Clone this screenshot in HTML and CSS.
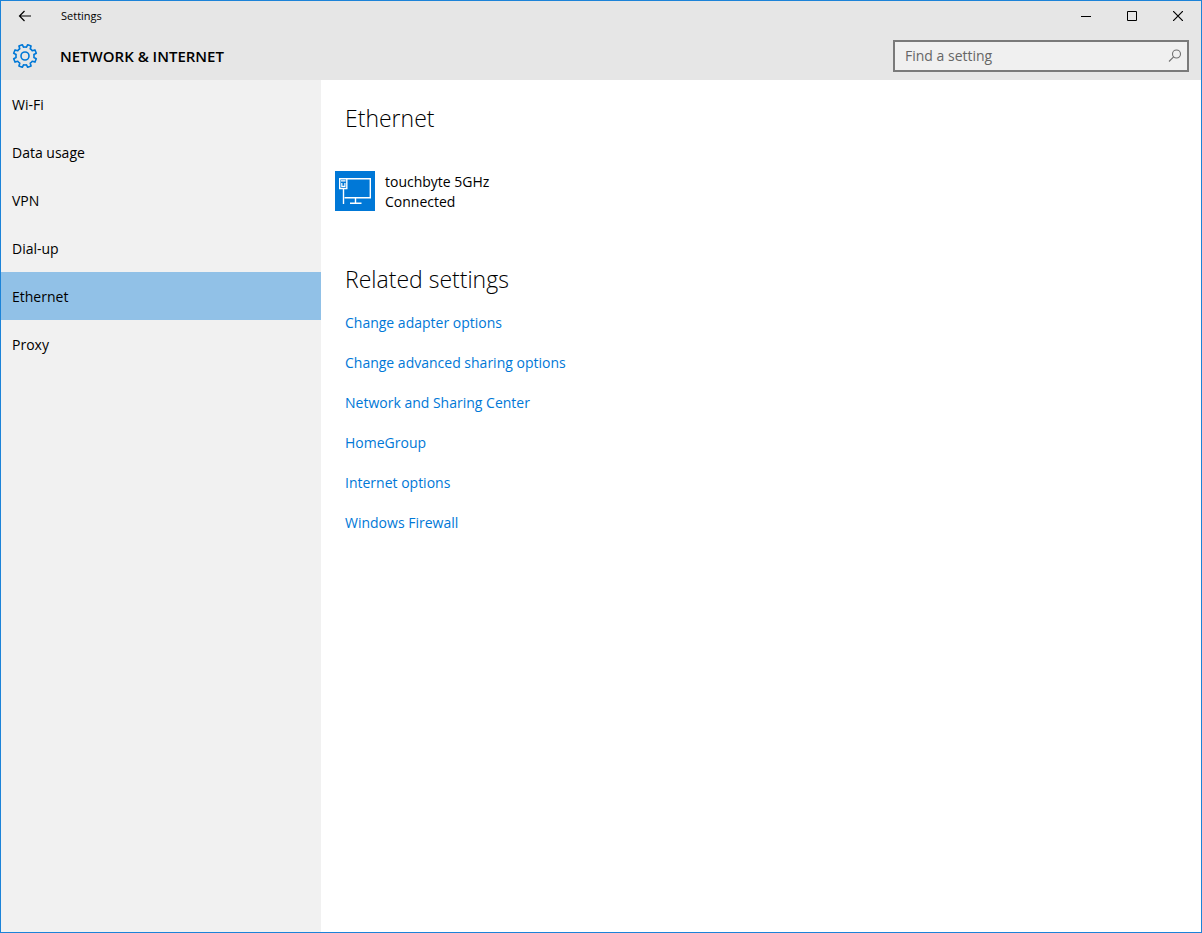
FILE: index.html
```html
<!DOCTYPE html>
<html lang="en">
<head>
<meta charset="utf-8">
<title>Settings</title>
<link rel="stylesheet" href="styles.css">
</head>
<body>
<div class="window">
  <header class="header">
    <div class="titlebar">
      <button class="back" type="button" aria-label="Back">
        <svg width="14" height="12" viewBox="0 0 14 12"><path d="M13 6H1.5M6.5 1L1.5 6l5 5" fill="none" stroke="#000" stroke-width="1.2"/></svg>
      </button>
      <span class="title">Settings</span>
      <div class="controls">
        <button type="button" aria-label="Minimize"><svg width="10" height="10" viewBox="0 0 10 10"><path d="M0 5.5h10" stroke="#000"/></svg></button>
        <button type="button" aria-label="Maximize"><svg width="10" height="10" viewBox="0 0 10 10"><path d="M.5.5h9v9h-9z" fill="none" stroke="#000"/></svg></button>
        <button type="button" aria-label="Close"><svg width="10" height="10" viewBox="0 0 10 10"><path d="M0 0l10 10M10 0L0 10" stroke="#000" stroke-width="1.2"/></svg></button>
      </div>
    </div>
    <div class="heading">
      <svg class="gear" width="26" height="26" viewBox="-13 -13 26 26" fill="none" stroke="#0078d7" stroke-width="1.6" stroke-linejoin="round">
        <path d="M8.9 1.5L11.3 2.7L9.9 6.1L7.3 5.2Q6.5 6.5 5.2 7.3L6.1 9.9L2.7 11.3L1.5 8.9Q0 9.2-1.5 8.9L-2.7 11.3L-6.1 9.9L-5.2 7.3Q-6.5 6.5-7.3 5.2L-9.9 6.1L-11.3 2.7L-8.9 1.5Q-9.2 0-8.9-1.5L-11.3-2.7L-9.9-6.1L-7.3-5.2Q-6.5-6.5-5.2-7.3L-6.1-9.9L-2.7-11.3L-1.5-8.9Q0-9.2 1.5-8.9L2.7-11.3L6.1-9.9L5.2-7.3Q6.5-6.5 7.3-5.2L9.9-6.1L11.3-2.7L8.9-1.5Q9.2 0 8.9 1.5Z"/>
        <circle r="4"/>
      </svg>
      <h1>NETWORK &amp; INTERNET</h1>
      <form class="search">
        <input type="text" placeholder="Find a setting" aria-label="Find a setting">
        <button type="submit" aria-label="Search"><svg width="14" height="14" viewBox="0 0 14 14" fill="none" stroke="#707070" stroke-width="1.1"><circle cx="8.5" cy="5" r="4"/><path d="M5.6 7.9L1 12.5"/></svg></button>
      </form>
    </div>
  </header>
  <div class="body">
    <nav class="sidebar">
      <a href="#">Wi-Fi</a>
      <a href="#">Data usage</a>
      <a href="#">VPN</a>
      <a href="#">Dial-up</a>
      <a href="#" class="active" aria-current="page">Ethernet</a>
      <a href="#">Proxy</a>
    </nav>
    <main class="content">
      <h2>Ethernet</h2>
      <button class="connection" type="button">
        <svg width="40" height="40" viewBox="0 0 40 40" fill="none" stroke="#fff">
          <path d="M0 0h40v40H0z" fill="#0078d7" stroke="none"/>
          <path d="M12 7.7h23.3v19.1H9.5M20.5 27v5M15 32.3h11.5" stroke-width="1.4"/>
          <path d="M8.5 18v15" stroke-width="1.4"/>
          <path d="M4.7 7.7h7.1v9.8H4.7z" stroke-width="1.4"/>
          <path d="M6 9.8h4.6M6.8 12v3.4h3.1V12" stroke-width="1.2"/>
        </svg>
        <span class="label"><span>touchbyte 5GHz</span><span>Connected</span></span>
      </button>
      <h2>Related settings</h2>
      <ul class="links">
        <li><a href="#">Change adapter options</a></li>
        <li><a href="#">Change advanced sharing options</a></li>
        <li><a href="#">Network and Sharing Center</a></li>
        <li><a href="#">HomeGroup</a></li>
        <li><a href="#">Internet options</a></li>
        <li><a href="#">Windows Firewall</a></li>
      </ul>
    </main>
  </div>
</div>
</body>
</html>
```
FILE: styles.css
```css
* {
  box-sizing: border-box;
}

body {
  margin: 0;
  font: 14px/20px "Segoe UI", "Open Sans", "Noto Sans", sans-serif;
  color: #000;
  background: #fff;
}

button,
input {
  font: inherit;
  color: inherit;
  margin: 0;
  padding: 0;
  border: 0;
  background: none;
}

svg {
  display: block;
  flex: none;
}

a {
  text-decoration: none;
}

.window {
  display: flex;
  flex-direction: column;
  min-height: 100vh;
  border: 1px solid #1c83d8;
}

.header {
  background: #e6e6e6;
}

.titlebar {
  display: flex;
  align-items: center;
  height: 30px;
}

.back {
  display: flex;
  align-items: center;
  justify-content: center;
  width: 48px;
  height: 30px;
}

.title {
  flex: 1;
  padding-left: 12px;
  font-size: 11px;
}

.controls {
  display: flex;
}

.controls button {
  display: flex;
  align-items: center;
  justify-content: center;
  width: 46px;
  height: 30px;
}

.heading {
  display: flex;
  align-items: center;
  height: 49px;
  padding: 1px 12px 0 11px;
}

h1 {
  flex: 1;
  margin: 0;
  padding-left: 22px;
  font-size: 15px;
  font-weight: 600;
}

.search {
  display: flex;
  align-items: center;
  width: 296px;
  height: 32px;
  padding: 0 5px 0 10px;
  border: 2px solid #7a7a7a;
  background: #f0f0f0;
}

.search input {
  flex: 1;
  min-width: 0;
  outline: 0;
}

.search input::placeholder {
  color: #666;
  opacity: 1;
}

.body {
  display: flex;
  flex: 1;
}

.sidebar {
  flex: none;
  width: 320px;
  background: #f1f1f1;
}

.sidebar a {
  display: block;
  padding: 15px 11px 13px;
  color: #000;
}

.sidebar .active {
  background: #91c1e7;
}

.content {
  flex: 1;
  padding: 22px 24px;
}

h2 {
  margin: 0;
  font-size: 23px;
  font-weight: 300;
  line-height: 32px;
}

.connection {
  display: flex;
  align-items: flex-start;
  gap: 10px;
  margin: 37px 0 51px -10px;
  text-align: left;
}

.label {
  padding-top: 1px;
}

.label span {
  display: block;
}

.links {
  display: grid;
  gap: 20px;
  margin: 18px 0 0;
  padding: 0;
  list-style: none;
}

.links a {
  color: #0078d7;
}
```
